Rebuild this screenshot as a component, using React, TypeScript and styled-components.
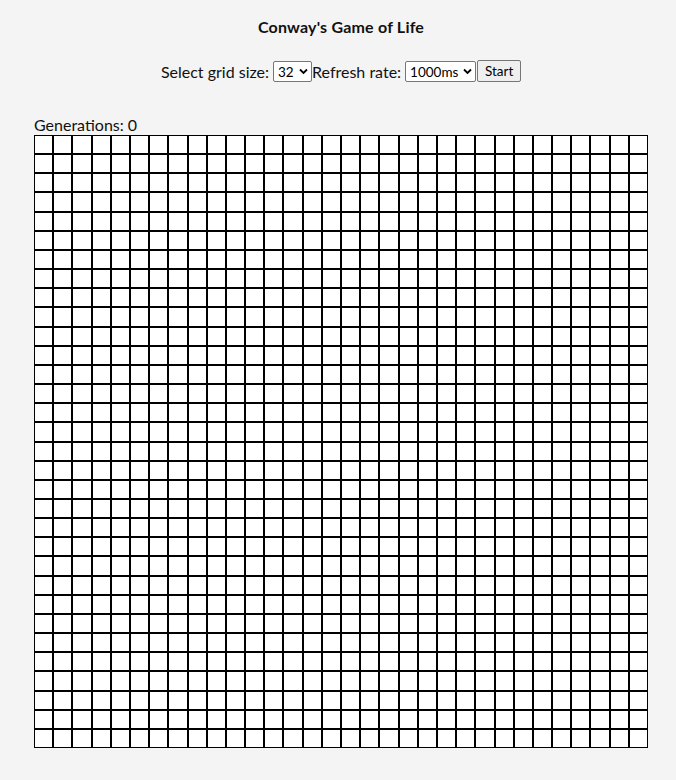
import React, { useState } from "react";
import styled, { createGlobalStyle } from "styled-components";

const Global = createGlobalStyle`
  html, body { margin: 0; padding: 0; background: #f4f4f4; }
  body { font-family: Lato, "Liberation Sans", sans-serif; color: #111; }
`;

const Page = styled.div`
  width: 614px;
  margin-left: 34px;
  padding-top: 17px;
  padding-bottom: 32px;
`;

const Title = styled.h1`
  margin: 0;
  font-size: 16px;
  line-height: 19px;
  font-weight: 700;
  letter-spacing: 0.2px;
  text-align: center;
`;

const Controls = styled.div`
  margin-top: 24px;
  display: flex;
  justify-content: center;
  align-items: center;
  height: 22px;
  font-size: 16px;
`;

const Label = styled.span<{ $gap?: number }>`
  margin-right: ${(p) => p.$gap ?? 0}px;
  white-space: pre;
`;

const SelectWrap = styled.span<{ $w: number }>`
  position: relative;
  display: inline-block;
  width: ${(p) => p.$w}px;
  height: 21px;
`;

const Select = styled.select`
  appearance: none;
  -webkit-appearance: none;
  width: 100%;
  height: 100%;
  box-sizing: border-box;
  border: 1px solid #767676;
  border-radius: 2px;
  background: #fff;
  font-family: Lato, "Liberation Sans", sans-serif;
  font-size: 13.5px;
  color: #000;
  padding: 0 0 0 4px;
  margin: 0;
`;

const Chevron = styled.svg`
  position: absolute;
  right: 4px;
  top: 7px;
  width: 9px;
  height: 7px;
  pointer-events: none;
`;

const Button = styled.button`
  width: 44px;
  height: 22px;
  box-sizing: border-box;
  border: 1px solid #767676;
  border-radius: 2px;
  background: #efefef;
  font-family: Lato, "Liberation Sans", sans-serif;
  font-size: 13.5px;
  color: #000;
  padding: 0;
  margin: 0 0 0 1px;
`;

const Generations = styled.div`
  margin-top: 34px;
  font-size: 16px;
  line-height: 18px;
`;

const Board = styled.div<{ $n: number }>`
  margin-top: 1px;
  width: 614px;
  height: 613px;
  display: grid;
  grid-template-columns: repeat(${(p) => p.$n}, 1fr);
  grid-template-rows: repeat(${(p) => p.$n}, 1fr);
  background: #000;
`;

const Cell = styled.div<{ $alive: boolean }>`
  border: 1px solid #000;
  background: ${(p) => (p.$alive ? "#000" : "#fff")};
`;

const ChevronIcon = () => (
  <Chevron viewBox="0 0 9 7">
    <path d="M1 1.5 L4.5 5 L8 1.5" fill="none" stroke="#000" strokeWidth="1.8" />
  </Chevron>
);

export default function App() {
  const [size, setSize] = useState(32);
  const [rate, setRate] = useState("1000");
  const cells = Array.from({ length: size * size }, (_, i) => i);
  return (
    <>
      <Global />
      <Page>
        <Title>Conway's Game of Life</Title>
        <Controls>
          <Label $gap={4}>Select grid size:</Label>
          <SelectWrap $w={39}>
            <Select value={size} onChange={(e) => setSize(Number(e.target.value))}>
              <option value={16}>16</option>
              <option value={32}>32</option>
              <option value={64}>64</option>
            </Select>
            <ChevronIcon />
          </SelectWrap>
          <Label $gap={4}>Refresh rate:</Label>
          <SelectWrap $w={71}>
            <Select value={rate} onChange={(e) => setRate(e.target.value)}>
              <option value="500">500ms</option>
              <option value="1000">1000ms</option>
              <option value="2000">2000ms</option>
            </Select>
            <ChevronIcon />
          </SelectWrap>
          <Button>Start</Button>
        </Controls>
        <Generations>Generations: 0</Generations>
        <Board $n={size}>
          {cells.map((i) => (
            <Cell key={i} $alive={false} />
          ))}
        </Board>
      </Page>
    </>
  );
}
